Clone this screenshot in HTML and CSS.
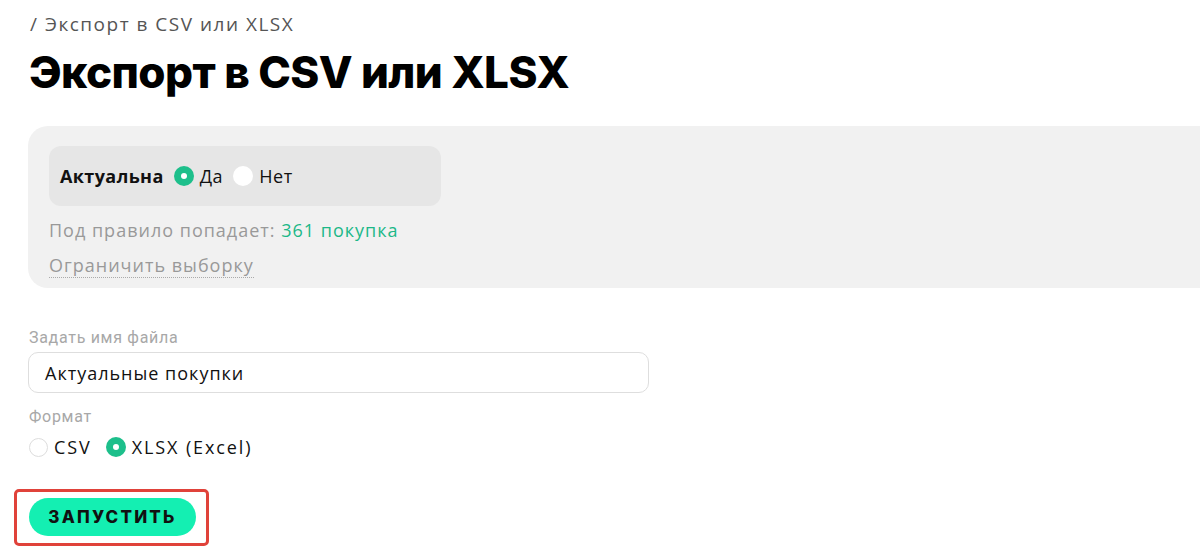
FILE: index.html
```html
<!DOCTYPE html>
<html lang="ru">
<head>
<meta charset="utf-8">
<link rel="stylesheet" href="styles.css">
</head>
<body>
<div class="page">
  <div class="crumb">/ Экспорт в CSV или XLSX</div>
  <h1 class="title">Экспорт в CSV или XLSX</h1>
  <div class="panel">
    <div class="filter">
      <span class="filter-label">Актуальна</span>
      <span class="radio checked"></span><span class="opt">Да</span>
      <span class="radio white"></span><span class="opt">Нет</span>
    </div>
    <div class="count">Под правило попадает: <span class="green">361 покупка</span></div>
    <div class="limit"><span class="dotted">Ограничить выборку</span></div>
  </div>
  <div class="field-label">Задать имя файла</div>
  <div class="input">Актуальные покупки</div>
  <div class="field-label fmt">Формат</div>
  <div class="formats">
    <span class="radio empty"></span><span class="opt">CSV</span>
    <span class="radio checked second"></span><span class="opt">XLSX (Excel)</span>
  </div>
  <div class="btn-wrap">
    <div class="highlight">
      <button class="run">ЗАПУСТИТЬ</button>
    </div>
  </div>
</div>
</body>
</html>
```
FILE: styles.css
```css
html, body {
  margin: 0;
  padding: 0;
  background: #fff;
}
body {
  font-family: "Open Sans", "Noto Sans", sans-serif;
  color: #111;
  overflow: hidden;
}
.page {
  padding: 12px 0 0 29px;
}
.crumb {
  font-family: "Open Sans", sans-serif;
  font-size: 19px;
  letter-spacing: 1.5px;
  color: #555;
  line-height: 24px;
  margin-left: 1px;
}
.title {
  font-family: "Inter", sans-serif;
  font-weight: 800;
  font-size: 44px;
  line-height: 52px;
  margin: 10px 0 0 0;
  color: #000;
  letter-spacing: -0.6px;
}
.panel {
  margin-top: 28px;
  margin-left: -1px;
  background: #f1f1f1;
  border-radius: 20px 0 0 20px;
  padding: 20px 0 8px 21px;
  height: 134px;
}
.filter {
  width: 392px;
  height: 60px;
  box-sizing: border-box;
  background: #e6e6e6;
  border-radius: 12px;
  display: flex;
  align-items: center;
  padding-left: 11px;
  font-size: 18px;
  letter-spacing: 0.6px;
}
.filter-label {
  font-weight: 700;
  letter-spacing: 0.4px;
  margin-right: 10px;
}
.radio {
  display: inline-block;
  width: 20px;
  height: 20px;
  border-radius: 50%;
  box-sizing: border-box;
  margin-right: 6px;
  flex: none;
}
.radio.checked {
  background: #1dbf8b;
  border: none;
  position: relative;
}
.radio.checked::after {
  content: "";
  position: absolute;
  left: 7px;
  top: 7px;
  width: 6px;
  height: 6px;
  border-radius: 50%;
  background: #fff;
}
.radio.white {
  background: #fff;
  margin-left: 10px;
}
.radio.empty {
  background: #fff;
  border: 1px solid #ddd;
  width: 19px;
  height: 19px;
}
.opt {
  color: #111;
}
.count {
  margin-top: 12px;
  font-size: 18px;
  letter-spacing: 1px;
  color: #999;
  line-height: 24px;
}
.green {
  color: #1cb888;
}
.limit {
  margin-top: 11px;
  font-size: 18px;
  letter-spacing: 1px;
  color: #999;
  line-height: 24px;
}
.dotted {
  border-bottom: 1px dotted #aaa;
}
.field-label {
  font-family: "Roboto", sans-serif;
  font-size: 16px;
  letter-spacing: 0.7px;
  color: #a8a8a8;
  margin-top: 40px;
  line-height: 20px;
}
.input {
  margin-top: 4px;
  width: 621px;
  height: 41px;
  box-sizing: border-box;
  border: 1px solid #dedede;
  border-radius: 10px;
  margin-left: -1px;
  padding-left: 16px;
  display: flex;
  align-items: center;
  font-size: 18px;
  letter-spacing: 1px;
  color: #111;
}
.field-label.fmt {
  margin-top: 14px;
}
.formats {
  margin-top: 8px;
  display: flex;
  align-items: center;
  font-size: 18px;
  letter-spacing: 1.9px;
  line-height: 24px;
}
.radio.second {
  margin-left: 14px;
}
.btn-wrap {
  margin-top: 30px;
  margin-left: -15px;
}
.highlight {
  display: inline-block;
  border: 3px solid #e0423a;
  border-radius: 5px;
  padding: 6px 10px 7px 12px;
}
.run {
  font-family: "Inter", sans-serif;
  font-weight: 800;
  font-size: 17px;
  letter-spacing: 2.2px;
  color: #111;
  background: #14efb2;
  border: none;
  border-radius: 20px;
  width: 167px;
  height: 38px;
  padding: 0;
  cursor: pointer;
}
```
